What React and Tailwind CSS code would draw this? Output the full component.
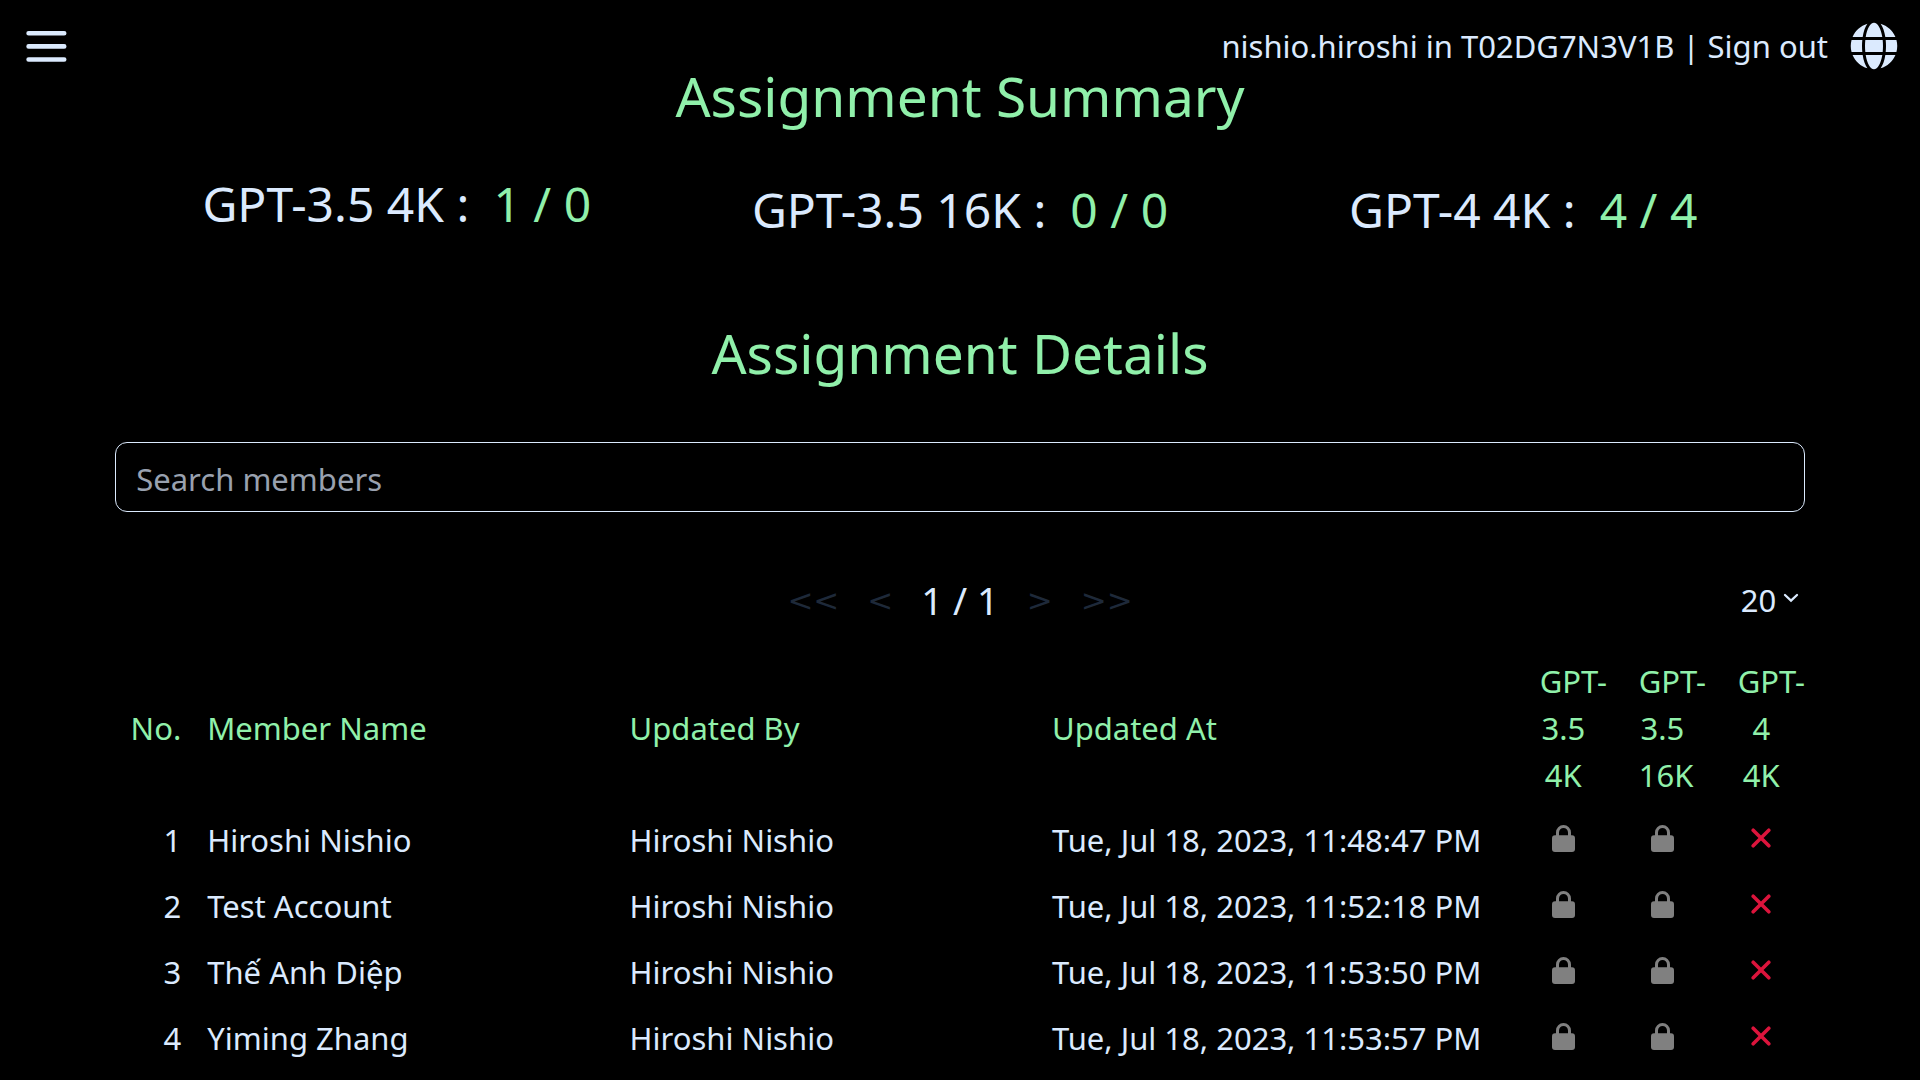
import { useState } from 'react';
import { FaGlobe } from 'react-icons/fa';

const summary = [
  { name: 'GPT-3.5 4K', assigned: 1, total: 0 },
  { name: 'GPT-3.5 16K', assigned: 0, total: 0 },
  { name: 'GPT-4 4K', assigned: 4, total: 4 },
];

const members = [
  { name: 'Hiroshi Nishio', updatedBy: 'Hiroshi Nishio', updatedAt: 'Tue, Jul 18, 2023, 11:48:47 PM' },
  { name: 'Test Account', updatedBy: 'Hiroshi Nishio', updatedAt: 'Tue, Jul 18, 2023, 11:52:18 PM' },
  { name: 'Thế Anh Diệp', updatedBy: 'Hiroshi Nishio', updatedAt: 'Tue, Jul 18, 2023, 11:53:50 PM' },
  { name: 'Yiming Zhang', updatedBy: 'Hiroshi Nishio', updatedAt: 'Tue, Jul 18, 2023, 11:53:57 PM' },
];

function Header() {
  return (
    <header className="flex h-[60px] items-start justify-between pl-[26px] pr-[22px] pt-[22px]">
      <button type="button" aria-label="Open menu" className="mt-2">
        <svg width="41" height="34" viewBox="0 0 41 34" stroke="currentColor" strokeWidth="4.6" strokeLinecap="round">
          <path d="M2.6 3.3h35.600M2.6 16.400h35.600M2.6 29.500h35.600" />
        </svg>
      </button>
      <div className="flex items-center text-[31px] leading-[46px]">
        <span className="whitespace-pre">nishio.hiroshi in T02DG7N3V1B | </span>
        <button type="button">Sign out</button>
        <button type="button" aria-label="Change language" className="ml-[22px]">
          <FaGlobe size={48} />
        </button>
      </div>
    </header>
  );
}

function Summary() {
  return (
    <section>
      <h1 className="text-center text-[55px] leading-[72px] text-[#90f0aa]">Assignment Summary</h1>
      <div className="mx-auto mt-9 grid w-[88%] grid-cols-3 text-center text-[48px] leading-[72px]">
        {summary.map((plan, index) => (
          <div key={plan.name} className={index === 0 ? '' : 'pt-[6px]'}>
            {plan.name} :
            <span className="ml-6 text-[#90f0aa]">
              {plan.assigned} / {plan.total}
            </span>
          </div>
        ))}
      </div>
    </section>
  );
}

function PageButton({ label, children }) {
  return (
    <button type="button" disabled aria-label={label} className="font-['DejaVu_Sans',sans-serif] text-[31px] text-gray-800">
      {children}
    </button>
  );
}

function Pager({ pageSize, onPageSizeChange }) {
  return (
    <nav className="mt-[60px] grid grid-cols-[1fr_auto_1fr] items-center" aria-label="Pages">
      <div className="col-start-2 flex items-center gap-7 leading-[56px]">
        <PageButton label="First page">&lt;&lt;</PageButton>
        <PageButton label="Previous page">&lt;</PageButton>
        <span className="text-[38px]">1 / 1</span>
        <PageButton label="Next page">&gt;</PageButton>
        <PageButton label="Last page">&gt;&gt;</PageButton>
      </div>
      <div className="flex items-center justify-self-end pr-[6px]">
        <select
          aria-label="Rows per page"
          value={pageSize}
          onChange={(event) => onPageSizeChange(event.target.value)}
          className="appearance-none bg-black text-[31px] leading-[48px]"
        >
          <option>20</option>
          <option>50</option>
        </select>
        <svg className="mb-1 ml-[6px]" width="16" height="10" viewBox="0 0 16 10" fill="none" stroke="currentColor" strokeWidth="2.3" strokeLinecap="round">
          <path d="M2 2l6 5.600 6-5.600" />
        </svg>
      </div>
    </nav>
  );
}

function Lock() {
  return (
    <svg className="mx-auto" width="23" height="27" viewBox="0 0 23 27">
      <path d="M5.500 12V7.500a6 6 0 0 1 12 0V12" fill="none" stroke="#808080" strokeWidth="3" />
      <rect y="10.300" width="23" height="16.700" rx="3" fill="#808080" />
    </svg>
  );
}

function Cross() {
  return (
    <svg className="mx-auto" width="20" height="20" viewBox="0 0 20 20" stroke="#dc143c" strokeWidth="3.6" strokeLinecap="round">
      <path d="M2.200 2.200l15.600 15.600M17.800 2.200L2.200 17.800" />
    </svg>
  );
}

function MembersTable({ rows }) {
  return (
    <table className="mt-[30px] w-full table-fixed text-left text-[31px]">
      <colgroup>
        <col className="w-[78px]" />
        <col className="w-1/4" />
        <col className="w-1/4" />
        <col />
        <col className="w-[99px]" />
        <col className="w-[99px]" />
        <col className="w-[99px]" />
      </colgroup>
      <thead className="leading-[47px] text-[#90f0aa]">
        <tr>
          <th className="pb-2 pr-3 text-right font-normal">No.</th>
          <th className="pb-2 pl-[14px] font-normal">Member Name</th>
          <th className="pb-2 pl-[14px] font-normal">Updated By</th>
          <th className="pb-2 pl-[14px] font-normal">Updated At</th>
          <th className="pb-2 pl-8 pr-5 text-center font-normal">GPT-<br />3.5<br />4K</th>
          <th className="pb-2 pl-8 pr-5 text-center font-normal">GPT-<br />3.5<br />16K</th>
          <th className="pb-2 pl-8 pr-5 text-center font-normal">GPT-<br />4<br />4K</th>
        </tr>
      </thead>
      <tbody className="leading-[66px]">
        {rows.map((member, index) => (
          <tr key={member.name}>
            <td className="pr-3 text-right">{index + 1}</td>
            <td className="pl-[14px]">{member.name}</td>
            <td className="pl-[14px]">{member.updatedBy}</td>
            <td className="whitespace-nowrap pl-[14px]">{member.updatedAt}</td>
            <td className="pb-1 pl-8 pr-5"><Lock /></td>
            <td className="pb-1 pl-8 pr-5"><Lock /></td>
            <td className="pb-1 pl-8 pr-5"><Cross /></td>
          </tr>
        ))}
      </tbody>
    </table>
  );
}

export default function App() {
  const [search, setSearch] = useState('');
  const [pageSize, setPageSize] = useState('20');
  const rows = members.filter((member) => member.name.toLowerCase().includes(search.toLowerCase()));

  return (
    <div className="min-h-screen bg-black font-['Noto_Sans',sans-serif] text-blue-100">
      <Header />
      <main>
        <Summary />
        <section className="mx-auto mt-[71px] w-[88%]">
          <h2 className="text-center text-[55px] leading-[72px] text-[#90f0aa]">Assignment Details</h2>
          <input
            type="text"
            aria-label="Search members"
            placeholder="Search members"
            value={search}
            onChange={(event) => setSearch(event.target.value)}
            className="mt-[53px] h-[70px] w-full rounded-xl border border-blue-100 bg-black px-5 pt-1 text-[31px] placeholder:text-gray-400"
          />
          <Pager pageSize={pageSize} onPageSizeChange={setPageSize} />
          <MembersTable rows={rows} />
        </section>
      </main>
    </div>
  );
}
